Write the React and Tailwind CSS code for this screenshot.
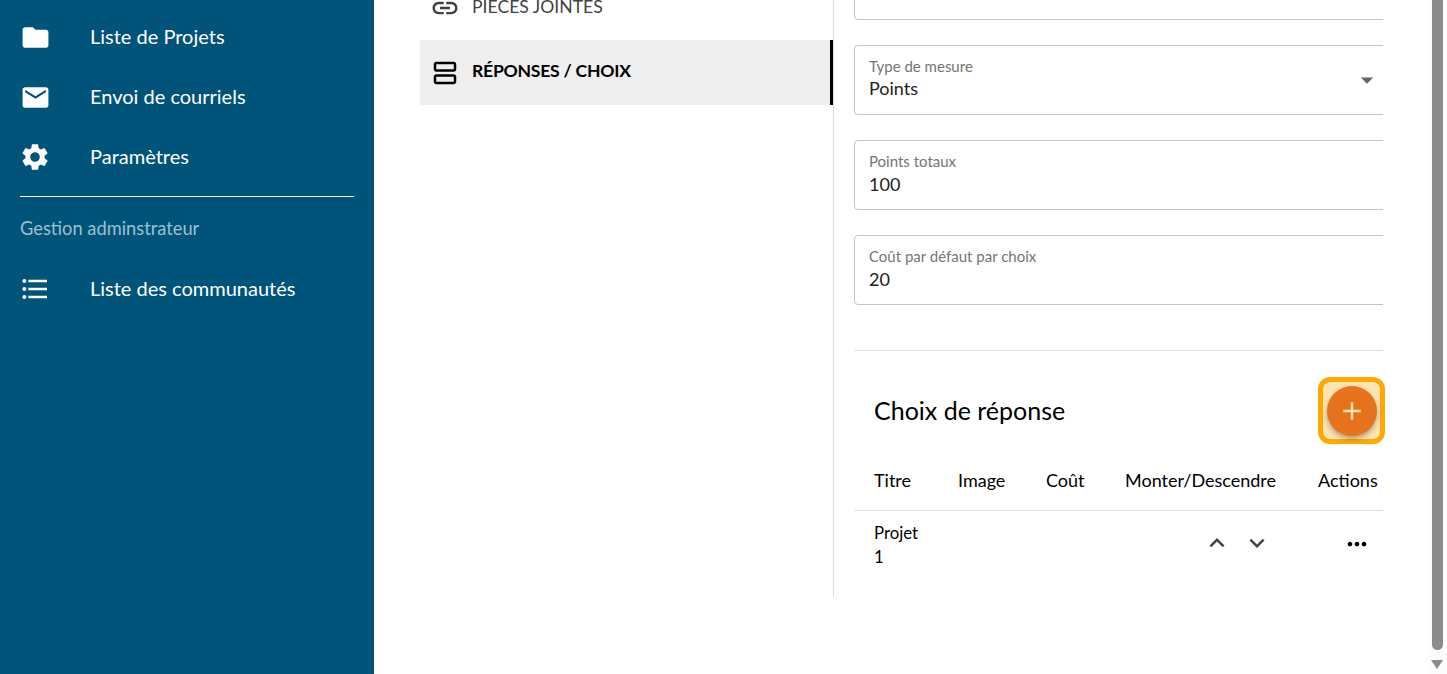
import {
  MdFolder,
  MdEmail,
  MdSettings,
  MdFormatListBulleted,
  MdLink,
  MdOutlineViewAgenda,
  MdKeyboardArrowUp,
  MdKeyboardArrowDown,
  MdMoreHoriz,
  MdAdd,
  MdArrowDropDown,
} from "react-icons/md";

function NavItem({ icon: Icon, label, size = 32 }) {
  return (
    <div className="flex h-[60px] items-center text-[20px] text-white">
      <div className="flex w-[70px] shrink-0 justify-center">
        <Icon size={size} />
      </div>
      <span className="mb-[2px] ml-[20px]">{label}</span>
    </div>
  );
}

function Field({ label, value, select }) {
  return (
    <div className="relative h-[70px] w-[540px] shrink-0 rounded border border-[#c4c4c4] pl-[14px] pt-[11px]">
      <div className="text-[15px] leading-[18px] text-[#757575]">{label}</div>
      <div className={select ? "mt-[1px] text-[18px] leading-[24px] text-[#212121]" : "mt-[2px] text-[18px] leading-[24px] text-[#212121]"}>{value}</div>
      {select && <MdArrowDropDown size={30} className="absolute left-[497px] top-[19px] text-[#666666]" />}
    </div>
  );
}

export default function App() {
  return (
    <div className="flex h-[674px] overflow-hidden bg-white font-['Lato',sans-serif]">
      {/* sidebar */}
      <aside className="w-[374px] shrink-0 bg-[#005379] pt-[7px]">
        <NavItem icon={MdFolder} label="Liste de Projets" size={31} />
        <NavItem icon={MdEmail} label="Envoi de courriels" size={31} />
        <NavItem icon={MdSettings} label="Paramètres" />
        <div className="mx-[20px] mt-[9px] h-px bg-white" />
        <div className="mb-[20px] ml-[20px] mt-[20px] text-[18.3px] leading-[22px] text-[#9cc0d3]">Gestion adminstrateur</div>
        <NavItem icon={MdFormatListBulleted} label="Liste des communautés" />
      </aside>

      {/* content */}
      <main className="flex h-[597px] w-[1009px] shrink-0">
        <nav className="ml-[46px] w-[414px] shrink-0 border-r border-[#dddddd]">
          <div className="-mt-[25px] flex h-[65px] items-center pl-[10px] text-[17.6px] text-[#424242]">
            <MdLink size={30} className="shrink-0" />
            <span className="ml-[12px]">PIÈCES JOINTES</span>
          </div>
          <div className="flex h-[65px] items-center border-r-[3px] border-black bg-[#efefef] pl-[10px] text-[17.6px] font-bold tracking-[-0.25px] text-black">
            <MdOutlineViewAgenda size={30} className="shrink-0" />
            <span className="mb-[2px] ml-[12px]">RÉPONSES / CHOIX</span>
          </div>
        </nav>

        <section className="ml-[20px] w-[529px] shrink-0 overflow-hidden">
          <div className="-mt-[50px] flex flex-col gap-[25px]">
            <Field label="" value="" />
            <Field label="Type de mesure" value="Points" select />
            <Field label="Points totaux" value="100" />
            <Field label="Coût par défaut par choix" value="20" />
          </div>
          <div className="mt-[45px] h-px bg-[#e0e0e0]" />
          <div className="flex h-[120px] items-center justify-between pl-[20px]">
            <h2 className="text-[25px] text-black">Choix de réponse</h2>
          </div>
          <div className="flex h-[39px] items-start pl-[20px] text-[18px] leading-[18px] text-black">
            <span className="w-[84px]">Titre</span>
            <span className="w-[88px]">Image</span>
            <span className="w-[79px]">Coût</span>
            <span className="w-[193px]">Monter/Descendre</span>
            <span>Actions</span>
          </div>
          <div className="h-px bg-[#e0e0e0]" />
          <div className="flex pl-[20px] pt-[10px] text-[16.8px] leading-[24px] text-black">
            <div className="w-[328px]">
              Projet
              <br />1
            </div>
            <div className="mt-[7px] flex w-[141px] gap-[10px] text-[#424242]">
              <MdKeyboardArrowUp size={30} />
              <MdKeyboardArrowDown size={30} />
            </div>
            <MdMoreHoriz size={28} className="mt-[9px] text-black" />
          </div>
        </section>

        <div className="relative">
          <button className="absolute left-[-65px] top-[377px] flex h-[67px] w-[67px] items-center justify-center rounded-[12px] border-[5px] border-[#ffa800] bg-[#fde2b3]">
            <span className="flex h-[50px] w-[50px] items-center justify-center rounded-full bg-[#e6731c] shadow-[0_3px_5px_rgba(0,0,0,0.3)]">
              <MdAdd size={30} className="text-[#fde2b3]" />
            </span>
          </button>
        </div>
      </main>

      {/* scrollbar */}
      <div className="ml-[45px] flex w-[19px] shrink-0 flex-col items-start bg-[#fcfcfc] pl-[4px]">
        <div className="h-[650px] w-[11px] rounded-b-[6px] bg-[#8c8c8c]" />
        <div className="ml-[-1px] mt-[10px] h-0 w-0 border-x-[6.5px] border-t-[9px] border-x-transparent border-t-[#8c8c8c]" />
      </div>
    </div>
  );
}
